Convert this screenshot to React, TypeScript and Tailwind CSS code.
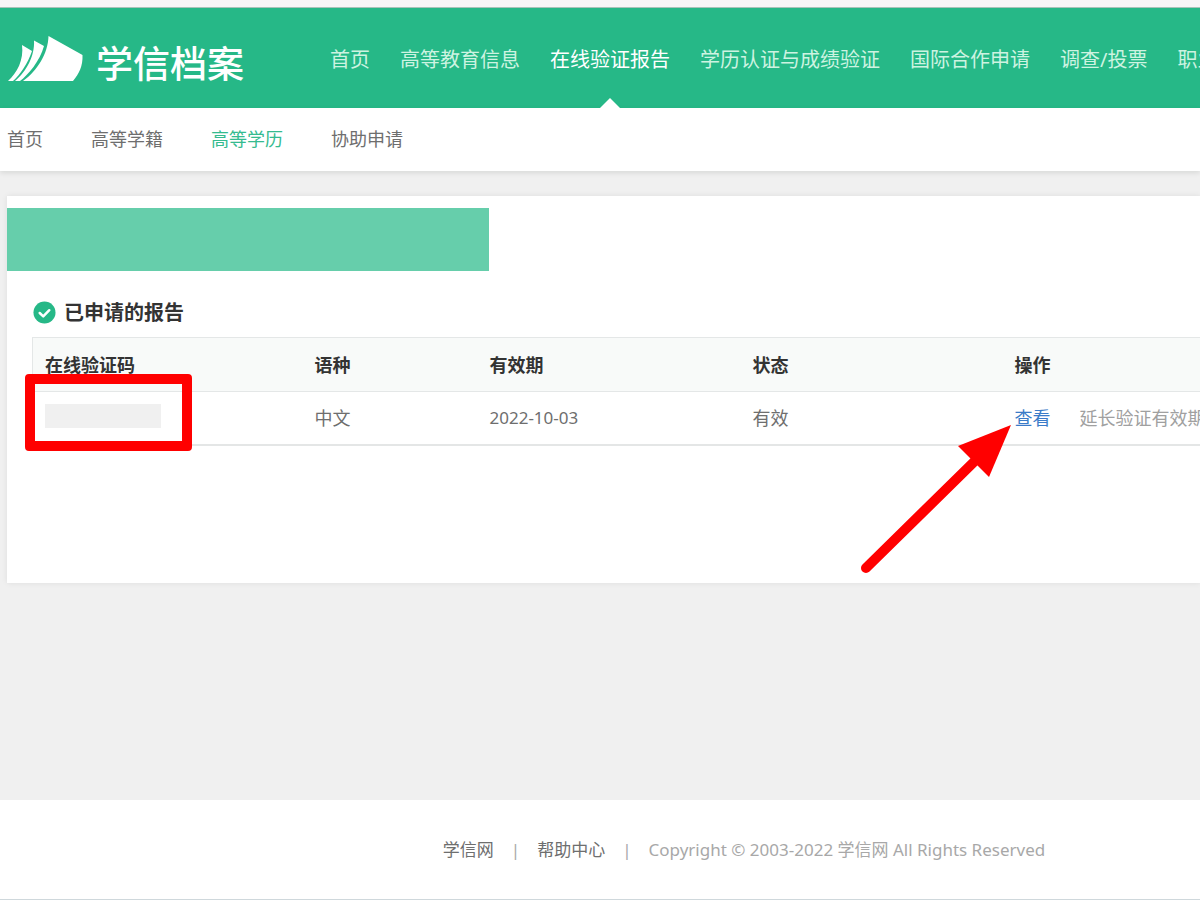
import type { ReactNode } from "react";

const navItems = [
  "首页",
  "高等教育信息",
  "在线验证报告",
  "学历认证与成绩验证",
  "国际合作申请",
  "调查/投票",
  "职业",
];
const activeNav = "在线验证报告";

const subItems = ["首页", "高等学籍", "高等学历", "协助申请"];
const activeSub = "高等学历";

function Logo() {
  return (
    <a href="#" className="flex w-[330px] shrink-0 items-center gap-[13px] pl-2 text-white">
      <svg viewBox="0 0 75 45" className="h-[45px] w-[75px] shrink-0" fill="currentColor" aria-hidden="true">
        <path d="M14 9 L24 15 C20 27 12 39 5 45 L0 45 C9 37 16 24 14 9Z" />
        <path d="M26 4.5 L36 10 C32 25 20 39 12 45 L7 45 C18 36 27 20 26 4.5Z" />
        <path d="M40.500 0 L74.500 19 C75 30 71 38 65 45 L15 45 C29 35 40 18 40.500 0Z" />
      </svg>
      <span className="pt-3 text-[37px] leading-10 font-medium whitespace-nowrap">学信档案</span>
    </a>
  );
}

function Header() {
  return (
    <header className="flex h-[101px] items-stretch overflow-hidden border-t border-[#a9c3b9] bg-[#26b887]">
      <Logo />
      <nav aria-label="主导航" className="flex gap-[30px] text-xl">
        {navItems.map((item) => (
          <a
            key={item}
            href="#"
            className={
              item === activeNav
                ? "relative flex items-center pt-1 whitespace-nowrap text-white"
                : "flex items-center pt-1 whitespace-nowrap text-[#cdf3e1]"
            }
          >
            {item}
            {item === activeNav && (
              <span className="absolute bottom-0 left-1/2 -ml-[10px] border-x-[10px] border-b-[10px] border-x-transparent border-b-white" />
            )}
          </a>
        ))}
      </nav>
    </header>
  );
}

function SubNav() {
  return (
    <nav
      aria-label="二级导航"
      className="flex h-[63px] shrink-0 items-center gap-12 bg-white pb-0.5 pl-[7px] text-lg text-[#6e6e6e] shadow-[0_2px_5px_rgba(0,20,10,0.1)]"
    >
      {subItems.map((item) => (
        <a key={item} href="#" className={item === activeSub ? "text-[#35bb8f]" : ""}>
          {item}
        </a>
      ))}
    </nav>
  );
}

function Head({ children }: { children: ReactNode }) {
  return (
    <th scope="col" className="h-[54px] pl-3 font-bold">
      {children}
    </th>
  );
}

function Arrow() {
  return (
    <svg
      viewBox="0 0 154 152"
      className="pointer-events-none absolute top-8 -left-[143px] h-[152px] w-[154px]"
      aria-hidden="true"
    >
      <path d="M6 144 L120 32" stroke="#ff0000" strokeWidth="10" strokeLinecap="round" />
      <path d="M151 1 L98 22 L129 53Z" fill="#ff0000" />
    </svg>
  );
}

function Reports() {
  return (
    <section className="pl-[25px]">
      <h2 className="flex h-[66px] items-center gap-2 pt-4 text-xl font-bold text-[#333]">
        <svg viewBox="0 0 24 24" className="ml-px h-[23px] w-[23px]" aria-hidden="true">
          <circle cx="12" cy="12" r="11.500" fill="#26b887" />
          <path
            d="M7 12.500 L10.700 16 L17 9.600"
            fill="none"
            stroke="#fff"
            strokeWidth="2.600"
            strokeLinecap="round"
            strokeLinejoin="round"
          />
        </svg>
        <span className="pt-0.5">已申请的报告</span>
      </h2>
      <table className="w-full min-w-[1180px] table-fixed border-collapse border-l border-[#e4e7e7] text-left text-lg">
        <colgroup>
          <col className="w-[270px]" />
          <col className="w-[175px]" />
          <col className="w-[263px]" />
          <col className="w-[262px]" />
          <col />
        </colgroup>
        <thead className="border-y border-[#e4e7e7] bg-[#f8faf9] text-[#333]">
          <tr>
            <Head>在线验证码</Head>
            <Head>语种</Head>
            <Head>有效期</Head>
            <Head>状态</Head>
            <Head>操作</Head>
          </tr>
        </thead>
        <tbody>
          <tr className="border-b-2 border-[#e4e6e6] text-[#6e6e6e]">
            <td className="relative h-[53px] bg-white pl-3">
              <div className="mb-1 h-6 w-[116px] bg-[#f0f0f0]" />
              <div className="absolute -top-[18px] -left-2 h-[77px] w-[167px] rounded border-10 border-[#ff0000]" />
            </td>
            <td className="pl-3">中文</td>
            <td className="pl-3 text-[17px]">2022-10-03</td>
            <td className="pl-3">有效</td>
            <td className="relative pl-3">
              <div className="flex gap-[29px] whitespace-nowrap">
                <a href="#" className="text-[#3a7bc8]">
                  查看
                </a>
                <span className="text-[#a0a0a0]">延长验证有效期</span>
              </div>
              <Arrow />
            </td>
          </tr>
        </tbody>
      </table>
    </section>
  );
}

function Footer() {
  return (
    <footer className="flex h-[100px] items-center justify-center gap-[17px] border-b border-[#cfd8dc] bg-white pl-[288px] text-[17px] whitespace-nowrap text-[#a8a8a8]">
      <a href="#" className="text-[#6e6e6e]">
        学信网
      </a>
      <span>|</span>
      <a href="#" className="text-[#6e6e6e]">
        帮助中心
      </a>
      <span>|</span>
      <span>Copyright © 2003-2022 学信网 All Rights Reserved</span>
    </footer>
  );
}

export default function App() {
  return (
    <div className="flex min-h-screen flex-col overflow-x-hidden bg-[#f0f0f0] font-['Noto_Sans','Noto_Sans_CJK_SC',sans-serif]">
      <div className="h-[7px] shrink-0 bg-[#f6f6f6]" />
      <Header />
      <SubNav />
      <main className="grow pt-[25px] pl-[7px]">
        <div className="min-h-[387px] bg-white pt-3 shadow-[0_0_6px_rgba(0,20,10,0.08)]">
          <div className="h-[63px] w-[482px] bg-[#66ceab]" />
          <Reports />
        </div>
      </main>
      <Footer />
    </div>
  );
}
